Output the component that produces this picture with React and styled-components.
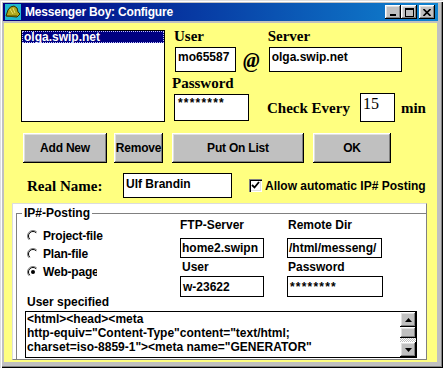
import React from 'react';
import styled, { createGlobalStyle, css } from 'styled-components';

const SANS = `"Liberation Sans", Arial, sans-serif`;
const SERIF = `"Liberation Serif", "Times New Roman", serif`;

const Global = createGlobalStyle`
  html, body { margin: 0; padding: 0; background: #c0c0c0; }
  body { width: 443px; height: 368px; overflow: hidden; font-family: ${SANS}; }
  * { box-sizing: border-box; }
`;

const bevelOut = css`
  box-shadow: inset -1px -1px 0 #000, inset 1px 1px 0 #fff,
    inset -2px -2px 0 #808080, inset 2px 2px 0 #dfdfdf;
`;

const Window = styled.div`
  width: 443px;
  height: 368px;
  background: #c0c0c0;
  display: flex;
  flex-direction: column;
  padding: 3px 5px 6px 3px;
  box-shadow: inset 1px 1px 0 #dfdfdf, inset 2px 2px 0 #fff,
    inset -1px -1px 0 #000, inset -2px -2px 0 #808080;
`;

const TitleBar = styled.div`
  height: 18px;
  display: flex;
  align-items: center;
  padding: 0 3px 0 2px;
  background: linear-gradient(to right, #000080, #1084d0);
`;

const TitleText = styled.span`
  margin-left: 4px;
  flex: 1;
  color: #fff;
  font: bold 12px ${SANS};
  letter-spacing: -0.2px;
  white-space: nowrap;
`;

const CaptionButton = styled.div`
  width: 16px;
  height: 14px;
  background: #c0c0c0;
  ${bevelOut};
  display: flex;
  align-items: center;
  justify-content: center;
  margin-left: ${(p) => (p.$gap ? 2 : 0)}px;
`;

const Client = styled.div`
  flex: 1;
  margin: 2px 1px 0 1px;
  background: #ffff80;
  display: flex;
  flex-direction: column;
`;

const TopSection = styled.div`
  display: flex;
  padding: 5px 0 0 17px;
`;

const ListBox = styled.div`
  margin-top: 2px;
  width: 144px;
  height: 92px;
  background: #fff;
  border: 1px solid #000;
  padding: 0;
`;

const ListItem = styled.div`
  height: 12px;
  padding-left: 2px;
  font: bold 12px/12px ${SANS};
  white-space: nowrap;
  color: ${(p) => (p.$selected ? '#fff' : '#000')};
  background: ${(p) => (p.$selected ? '#000080' : 'transparent')};
  outline: ${(p) => (p.$selected ? '1px dotted #c0c0ff' : 'none')};
  outline-offset: -1px;
`;

const RightBlock = styled.div`
  margin-left: 7px;
  display: flex;
  flex-direction: column;
`;

const Row = styled.div`
  display: flex;
  align-items: ${(p) => p.$align || 'flex-start'};
  margin-top: ${(p) => p.$mt || 0}px;
`;

const Field = styled.div`
  display: flex;
  flex-direction: column;
  margin-left: ${(p) => p.$ml || 0}px;
`;

const SerifLabel = styled.div`
  font: bold 15px/17px ${SERIF};
  color: #000;
  white-space: nowrap;
  margin-left: ${(p) => p.$ml || 0}px;
  padding-top: ${(p) => p.$pt || 0}px;
  width: ${(p) => (p.$w ? `${p.$w}px` : 'auto')};
`;

const TextBox = styled.div`
  width: ${(p) => p.$w}px;
  height: ${(p) => p.$h}px;
  margin-top: ${(p) => p.$mt || 0}px;
  margin-left: ${(p) => p.$ml || 0}px;
  background: #fff;
  border: 1px solid #000;
  padding: ${(p) => p.$pad || '1px 2px'};
  font: bold 12px/14px ${SANS};
  color: #000;
  white-space: nowrap;
  overflow: hidden;
  display: flex;
  align-items: ${(p) => (p.$center ? 'center' : 'flex-start')};
  letter-spacing: ${(p) => (p.$secret ? '1.2px' : 'normal')};
`;

const NumberBox = styled(TextBox)`
  font: 16px/18px ${SERIF};
  padding: 1px 2px;
`;

const AtSign = styled.div`
  margin-left: 7px;
  height: 25px;
  align-self: flex-end;
  display: flex;
  align-items: center;
  font: italic bold 20px/20px ${SERIF};
  color: #000;
`;

const CheckGroup = styled.div`
  margin-left: 18px;
  margin-bottom: -1px;
  height: 29px;
  display: flex;
  align-items: center;
`;

const ButtonRow = styled.div`
  display: flex;
  padding-left: 19px;
  margin-top: 11px;
`;

const Button = styled.div`
  width: ${(p) => p.$w}px;
  height: 30px;
  margin-left: ${(p) => p.$ml || 0}px;
  background: #c0c0c0;
  ${bevelOut};
  display: flex;
  align-items: center;
  justify-content: center;
  font: bold 12px ${SANS};
  letter-spacing: -0.2px;
  color: #000;
  white-space: nowrap;
`;

const NameRow = styled.div`
  display: flex;
  align-items: center;
  padding-left: 23px;
  margin-top: 10px;
`;

const CheckBox = styled.div`
  width: 13px;
  height: 13px;
  margin-left: 17px;
  background: #fff;
  box-shadow: inset 1px 1px 0 #808080, inset 2px 2px 0 #000,
    inset -1px -1px 0 #fff, inset -2px -2px 0 #dfdfdf;
  display: flex;
  align-items: center;
  justify-content: center;
`;

const SansLabel = styled.div`
  font: bold 12px/14px ${SANS};
  color: #000;
  white-space: nowrap;
  margin-left: ${(p) => p.$ml || 0}px;
  margin-top: ${(p) => p.$mt || 0}px;
  height: 14px;
`;

const Panel = styled.div`
  margin: 5px 0 0 8px;
  width: 415px;
  height: 157px;
  background: #fff;
  border: 1px solid;
  border-color: #dcdcdc #808080 #808080 #dcdcdc;
  display: flex;
  flex-direction: column;
`;

const Group = styled.div`
  position: relative;
  flex: 1;
  margin: 9px 0 0 3px;
  border-top: 1px solid #808080;
  border-left: 1px solid #808080;
  padding: 4px 0 0 8px;
  display: flex;
  flex-direction: column;
`;

const Legend = styled.span`
  position: absolute;
  top: -8px;
  left: 5px;
  padding: 0 2px;
  background: #fff;
  font: bold 12px/14px ${SANS};
  color: #000;
`;

const GroupTop = styled.div`
  display: flex;
`;

const RadioColumn = styled.div`
  width: 155px;
  padding-left: 2px;
  margin-top: 9px;
  display: flex;
  flex-direction: column;
`;

const RadioRow = styled.div`
  width: ${(p) => p.$w}px;
  height: 18px;
  display: flex;
  align-items: center;
  overflow: hidden;
  white-space: nowrap;
  font: bold 12px/14px ${SANS};
  letter-spacing: -0.2px;
  color: #000;
  gap: 4px;
`;

const FieldColumn = styled.div`
  width: ${(p) => p.$w}px;
  margin-left: ${(p) => p.$ml || 0}px;
  display: flex;
  flex-direction: column;
`;

const TextArea = styled.div`
  margin-top: 2px;
  width: 392px;
  height: 47px;
  border: 1px solid #000;
  background: #fff;
  display: flex;
`;

const TextAreaBody = styled.div`
  flex: 1;
  padding: 0 0 0 1px;
  font: bold 12px/14px ${SANS};
  color: #000;
  white-space: pre;
  overflow: hidden;
`;

const ScrollBar = styled.div`
  width: 16px;
  display: flex;
  flex-direction: column;
`;

const ScrollButton = styled.div`
  height: ${(p) => p.$h}px;
  background: #c0c0c0;
  ${bevelOut};
  display: flex;
  align-items: center;
  justify-content: center;
`;

const ScrollTrack = styled.div`
  flex: 1;
  background: repeating-conic-gradient(#c0c0c0 0 25%, #fff 0 50%) 0 0 / 2px 2px;
`;

const AppIcon = () => (
  <svg width="16" height="16" viewBox="0 0 16 16">
    <rect x="0" y="0" width="16" height="16" fill="#20b8d0" />
    <path d="M1 12 L3 6 Q5 2 9 2 Q13 3 13 8 L15 10 L12 13 Z" fill="#b0a820" stroke="#303000" strokeWidth="1" />
    <path d="M5 5 L8 10 M8 4 L10 9" stroke="#e8e070" strokeWidth="1" fill="none" />
    <path d="M2 12 L12 12" stroke="#605800" strokeWidth="1.2" />
  </svg>
);

const MinGlyph = () => (
  <svg width="8" height="7" viewBox="0 0 8 7"><rect x="1" y="5" width="6" height="2" fill="#000" /></svg>
);
const MaxGlyph = () => (
  <svg width="9" height="9" viewBox="0 0 9 9">
    <rect x="0.5" y="0.5" width="8" height="8" fill="none" stroke="#000" />
    <rect x="0" y="0" width="9" height="2" fill="#000" />
  </svg>
);
const CloseGlyph = () => (
  <svg width="8" height="7" viewBox="0 0 8 7">
    <path d="M0.5 0 L7.5 7 M7.5 0 L0.5 7" stroke="#000" strokeWidth="1.6" />
  </svg>
);
const Arrow = ({ up }) => (
  <svg width="7" height="4" viewBox="0 0 7 4">
    <path d={up ? 'M3.5 0 L7 4 L0 4 Z' : 'M0 0 L7 0 L3.5 4 Z'} fill="#000" />
  </svg>
);
const CheckMark = () => (
  <svg width="9" height="9" viewBox="0 0 9 9">
    <path d="M1 4 L3.5 6.5 L8 1" stroke="#000" strokeWidth="1.8" fill="none" />
  </svg>
);
const Radio = ({ checked }) => (
  <svg width="12" height="12" viewBox="0 0 12 12" style={{ flex: 'none' }}>
    <circle cx="6" cy="6" r="5.5" fill="#fff" />
    <path d="M2.1 9.9 A5.5 5.5 0 0 1 9.9 2.1" stroke="#808080" fill="none" />
    <path d="M2.8 9.2 A4.5 4.5 0 0 1 9.2 2.8" stroke="#000" fill="none" />
    {checked && <circle cx="6" cy="6" r="2" fill="#000" />}
  </svg>
);

export default function App() {
  return (
    <>
      <Global />
      <Window>
        <TitleBar>
          <AppIcon />
          <TitleText>Messenger Boy: Configure</TitleText>
          <CaptionButton><MinGlyph /></CaptionButton>
          <CaptionButton><MaxGlyph /></CaptionButton>
          <CaptionButton $gap><CloseGlyph /></CaptionButton>
        </TitleBar>
        <Client>
          <TopSection>
            <ListBox>
              <ListItem $selected>olga.swip.net</ListItem>
            </ListBox>
            <RightBlock>
              <Row>
                <Field $ml={2}>
                  <SerifLabel>User</SerifLabel>
                  <TextBox $w={61} $h={25} $mt={2} $ml={1} $pad="2px 2px">mo65587</TextBox>
                </Field>
                <AtSign>@</AtSign>
                <Field $ml={8}>
                  <SerifLabel>Server</SerifLabel>
                  <TextBox $w={133} $h={25} $mt={2} $ml={1} $pad="2px 2px">olga.swip.net</TextBox>
                </Field>
              </Row>
              <Row $mt={3} $align="flex-end">
                <Field>
                  <SerifLabel>Password</SerifLabel>
                  <TextBox $w={75} $h={27} $mt={2} $ml={2} $pad="1px 3px" $secret>********</TextBox>
                </Field>
                <CheckGroup>
                  <SerifLabel $pt={1}>Check Every</SerifLabel>
                  <NumberBox $w={35} $h={29} $ml={10}>15</NumberBox>
                  <SerifLabel $ml={6} $pt={1}>min</SerifLabel>
                </CheckGroup>
              </Row>
            </RightBlock>
          </TopSection>

          <ButtonRow>
            <Button $w={84}>Add New</Button>
            <Button $w={49} $ml={7}>Remove</Button>
            <Button $w={132} $ml={9}>Put On List</Button>
            <Button $w={78} $ml={9}>OK</Button>
          </ButtonRow>

          <NameRow>
            <SerifLabel $w={96} $pt={2}>Real Name:</SerifLabel>
            <TextBox $w={109} $h={25} $pad="3px 2px">Ulf Brandin</TextBox>
            <CheckBox><CheckMark /></CheckBox>
            <SansLabel $ml={3}>Allow automatic IP# Posting</SansLabel>
          </NameRow>

          <Panel>
            <Group>
              <Legend>IP#-Posting</Legend>
              <GroupTop>
                <RadioColumn>
                  <RadioRow $w={90}><Radio />Project-file</RadioRow>
                  <RadioRow $w={90}><Radio />Plan-file</RadioRow>
                  <RadioRow $w={70}><Radio checked />Web-page</RadioRow>
                  <SansLabel $mt={14}>User specified</SansLabel>
                </RadioColumn>
                <FieldColumn $w={84}>
                  <SansLabel>FTP-Server</SansLabel>
                  <TextBox $w={84} $h={20} $mt={6} $center $pad="0 1px">home2.swipn</TextBox>
                  <SansLabel $mt={2} $ml={2}>User</SansLabel>
                  <TextBox $w={84} $h={21} $mt={2} $center $pad="0 2px">w-23622</TextBox>
                </FieldColumn>
                <FieldColumn $w={96} $ml={23}>
                  <SansLabel $ml={1}>Remote Dir</SansLabel>
                  <TextBox $w={95} $h={20} $mt={6} $center $pad="0 1px">/html/messeng/</TextBox>
                  <SansLabel $mt={2} $ml={1}>Password</SansLabel>
                  <TextBox $w={96} $h={21} $mt={2} $center $pad="0 2px" $secret>********</TextBox>
                </FieldColumn>
              </GroupTop>
              <TextArea>
                <TextAreaBody>{'<html><head><meta\nhttp-equiv="Content-Type"content="text/html;\ncharset=iso-8859-1"><meta name="GENERATOR"'}</TextAreaBody>
                <ScrollBar>
                  <ScrollButton $h={15}><Arrow up /></ScrollButton>
                  <ScrollButton $h={11} />
                  <ScrollTrack />
                  <ScrollButton $h={15}><Arrow /></ScrollButton>
                </ScrollBar>
              </TextArea>
            </Group>
          </Panel>
        </Client>
      </Window>
    </>
  );
}
